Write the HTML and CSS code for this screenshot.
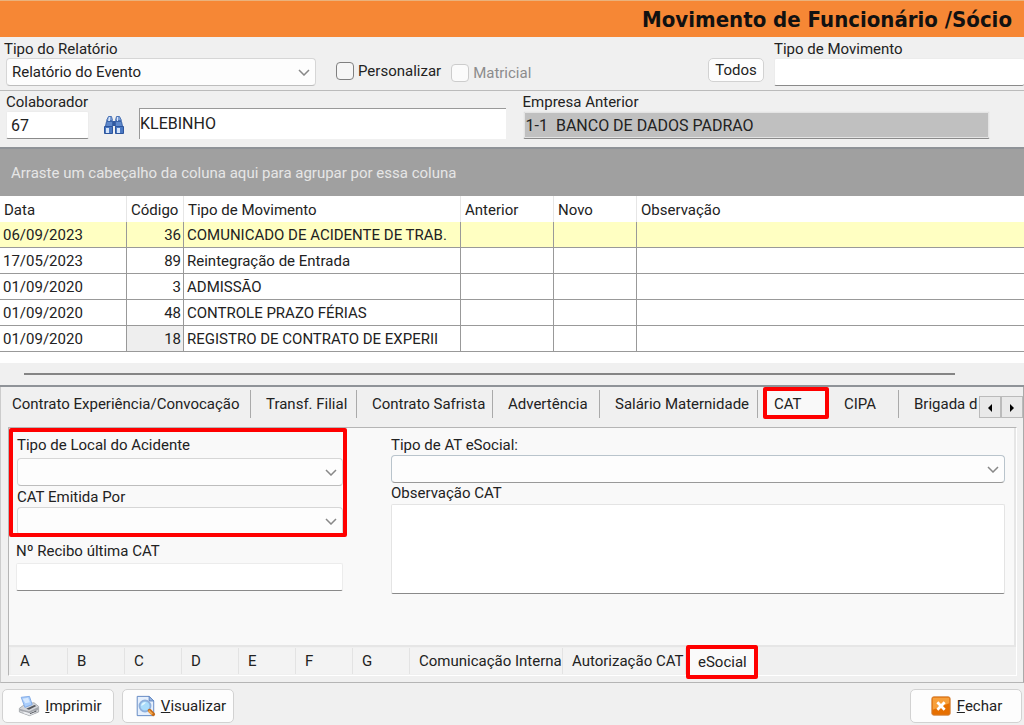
FILE: index.html
```html
<!DOCTYPE html>
<html lang="pt-BR">
<head>
  <meta charset="UTF-8">
  <meta name="viewport" content="width=device-width, initial-scale=1.0">
  <title>Movimento de Funcionário /Sócio</title>
  <link rel="stylesheet" href="styles.css">
</head>
<body>
  <header class="title-bar">
    <h1>Movimento de Funcionário /Sócio</h1>
  </header>

  <section class="filters">
    <div class="field report">
      <label for="report">Tipo do Relatório</label>
      <div class="select">
        <select id="report"><option>Relatório do Evento</option></select>
        <svg viewBox="0 0 12 7"><path d="M1 1l5 5 5-5"/></svg>
      </div>
    </div>
    <label class="check"><input type="checkbox"> Personalizar</label>
    <label class="check disabled"><input type="checkbox" disabled> Matricial</label>
    <button class="btn all">Todos</button>
    <div class="field movement">
      <label for="movement">Tipo de Movimento</label>
      <input id="movement" type="text">
    </div>
  </section>

  <section class="employee">
    <div class="field code">
      <label for="code">Colaborador</label>
      <input id="code" type="text" value="67">
    </div>
    <button class="search" aria-label="Procurar">
      <svg viewBox="0 0 22 20">
        <path fill="#7d9fd6" stroke="#4a72b4" d="M5.500 1.500h3l1 4h-6zM13.500 1.500h3l2 4h-6z"/>
        <path fill="#31599f" d="M9 6h4v5H9z"/>
        <path fill="#5e88cb" stroke="#3a63a8" d="M3.500 6.500h6v5h-7zM12.500 6.500h6l1 5h-7z"/>
        <path fill="#4a78c2" stroke="#2d559c" d="M1.500 11.500h8v7h-8zM12.500 11.500h8v7h-8z"/>
        <path fill="#d6e5f9" d="M3 13h3v5H3zM14 13h3v5h-3zM6 2h1v4H5zM14 2h1v4h-1z"/>
      </svg>
    </button>
    <input class="name" type="text" value="KLEBINHO" aria-label="Nome">
    <div class="field company">
      <label for="company">Empresa Anterior</label>
      <input id="company" type="text" value="1-1  BANCO DE DADOS PADRAO" readonly>
    </div>
  </section>

  <section class="grid">
    <p class="group-by">Arraste um cabeçalho da coluna aqui para agrupar por essa coluna</p>
    <table>
      <colgroup>
        <col class="c-date"><col class="c-code"><col class="c-type"><col class="c-prev"><col class="c-new"><col>
      </colgroup>
      <thead>
        <tr><th>Data</th><th>Código</th><th>Tipo de Movimento</th><th>Anterior</th><th>Novo</th><th>Observação</th></tr>
      </thead>
      <tbody>
        <tr class="current"><td>06/09/2023</td><td>36</td><td>COMUNICADO DE ACIDENTE DE TRAB.</td><td></td><td></td><td></td></tr>
        <tr><td>17/05/2023</td><td>89</td><td>Reintegração de Entrada</td><td></td><td></td><td></td></tr>
        <tr><td>01/09/2020</td><td>3</td><td>ADMISSÃO</td><td></td><td></td><td></td></tr>
        <tr><td>01/09/2020</td><td>48</td><td>CONTROLE PRAZO FÉRIAS</td><td></td><td></td><td></td></tr>
        <tr><td>01/09/2020</td><td class="focus">18</td><td>REGISTRO DE CONTRATO DE EXPERII</td><td></td><td></td><td></td></tr>
      </tbody>
    </table>
    <div class="scroll"><div class="thumb"></div></div>
  </section>

  <main>
    <nav class="tabs">
      <button>Contrato Experiência/Convocação</button>
      <button>Transf. Filial</button>
      <button>Contrato Safrista</button>
      <button>Advertência</button>
      <button>Salário Maternidade</button>
      <button class="active marked">CAT</button>
      <button>CIPA</button>
      <button>Brigada d</button>
      <div class="arrows">
        <button aria-label="Anterior"><svg viewBox="0 0 6 8"><path d="M5 0v8L1 4z"/></svg></button>
        <button aria-label="Próximo"><svg viewBox="0 0 6 8"><path d="M1 0v8l4-4z"/></svg></button>
      </div>
    </nav>

    <div class="panel">
      <div class="form">
        <div class="left">
          <div class="accident marked">
            <label for="place">Tipo de Local do Acidente</label>
            <div class="select">
              <select id="place"><option></option></select>
              <svg viewBox="0 0 12 7"><path d="M1 1l5 5 5-5"/></svg>
            </div>
            <label for="issuer">CAT Emitida Por</label>
            <div class="select">
              <select id="issuer"><option></option></select>
              <svg viewBox="0 0 12 7"><path d="M1 1l5 5 5-5"/></svg>
            </div>
          </div>
          <div class="receipt">
            <label for="receipt">Nº Recibo última CAT</label>
            <input id="receipt" type="text">
          </div>
        </div>
        <div class="right">
          <label for="kind">Tipo de AT eSocial:</label>
          <div class="select hot">
            <select id="kind"><option></option></select>
            <svg viewBox="0 0 12 7"><path d="M1 1l5 5 5-5"/></svg>
          </div>
          <label for="notes">Observação CAT</label>
          <textarea id="notes"></textarea>
        </div>
      </div>
      <nav class="subtabs">
        <button>A</button>
        <button>B</button>
        <button>C</button>
        <button>D</button>
        <button>E</button>
        <button>F</button>
        <button>G</button>
        <button>Comunicação Interna</button>
        <button>Autorização CAT</button>
        <button class="active marked">eSocial</button>
      </nav>
    </div>
  </main>

  <footer>
    <button class="btn">
      <svg viewBox="0 0 24 24">
        <path fill="#d4d6da" stroke="#a4a7ac" d="M1.500 14.500l7-5 9-1 5 4v6l-10 4-11-4z"/>
        <path fill="#a9cdfb" stroke="#7fa9e6" d="M3.500 2.500l9-1 3 9-8 3z"/>
        <path fill="#d5e8ff" d="M5 4l6-1 2 5-5 1z"/>
        <path fill="#a2a5ab" d="M2 15l10 3 10-5v3l-10 4-10-3z"/>
        <path fill="#eceef1" d="M6 18l7 2 5-3v3l-5 2-7-2z"/>
        <path fill="#54575d" d="M9 15l9-4 2 1-8 4zM13 20l7-3v1l-7 3z"/>
      </svg>
      <span><u>I</u>mprimir</span>
    </button>
    <button class="btn">
      <svg viewBox="0 0 24 24">
        <path fill="#e6f0fd" stroke="#5b82c0" d="M3.500 1.500h13l5 5v16h-18z"/>
        <path fill="#9bb8e4" stroke="#5b82c0" d="M16.500 1.500v5h5z"/>
        <circle cx="12" cy="12" r="6" fill="#a9dcfb" stroke="#8fb0dc" stroke-width="2"/>
        <path fill="#e2f6ff" d="M8 12a4 4 0 0 1 5-4c-1 2-3 3-5 4z"/>
        <path fill="none" stroke="#c56a17" stroke-width="4" stroke-linecap="round" d="M17 17l4 4"/>
        <path fill="none" stroke="#f6a84c" stroke-width="2" d="M16 17l4 4"/>
      </svg>
      <span><u>V</u>isualizar</span>
    </button>
    <button class="btn close">
      <svg viewBox="0 0 24 24">
        <rect x="2" y="2" width="20" height="20" rx="2" fill="#e66f00" stroke="#d0813c"/>
        <path fill="#f7a03c" d="M3 3h18v6L3 16z"/>
        <path fill="none" stroke="#fff" stroke-width="3" d="M8 8l8 8M16 8l-8 8"/>
      </svg>
      <span><u>F</u>echar</span>
    </button>
  </footer>
</body>
</html>
```
FILE: styles.css
```css
* {
  box-sizing: border-box;
}
body {
  display: flex;
  flex-direction: column;
  min-height: 100vh;
  margin: 0;
  overflow-x: hidden;
  font: 15px/18px Roboto, "Liberation Sans", sans-serif;
  color: #222;
  background: #f0f0f0;
}
button, input, select, textarea {
  font: inherit;
  color: inherit;
}
button {
  padding: 0;
  border: 0;
  background: none;
  white-space: nowrap;
}
label {
  display: block;
  white-space: nowrap;
}
input[type="text"] {
  display: block;
  width: 100%;
  height: 28px;
  padding: 0 4px;
  border: 1px solid #ececec;
  border-bottom-color: #8a8a8a;
  border-radius: 2px;
  background: #fff;
}

.title-bar {
  display: flex;
  justify-content: flex-end;
  align-items: center;
  height: 37px;
  padding: 2px 12px 0;
  border-top: 1px solid #eab27c;
  background: #f68735;
}
h1 {
  margin: 0;
  font: bold 22px/28px "DejaVu Sans Condensed", "DejaVu Sans", sans-serif;
  color: #111;
}

/* 下拉框 */
.select {
  position: relative;
}
.select select {
  display: block;
  width: 100%;
  height: 28px;
  padding: 0 5px;
  border: 1px solid #d6d6d6;
  border-bottom-color: #bdbdbd;
  border-radius: 4px;
  background: #fdfdfd;
  appearance: none;
}
.select svg {
  position: absolute;
  right: 6px;
  top: 11px;
  width: 12px;
  height: 7px;
  fill: none;
  stroke: #888;
  stroke-width: 1.5;
  pointer-events: none;
}

.filters {
  display: flex;
  align-items: flex-start;
  height: 54px;
  padding: 3px 0 0 6px;
  border-bottom: 1px solid #bbb;
}
.report {
  width: 310px;
}
.report label {
  margin-left: -2px;
}
.check {
  display: flex;
  align-items: center;
  gap: 4px;
  margin: 22px 0 0 20px;
}
.check + .check {
  margin: 24px 0 0 10px;
}
.check input {
  width: 18px;
  height: 18px;
  margin: 0;
  border: 1px solid #808080;
  border-radius: 4px;
  background: #f6f6f6;
  appearance: none;
}
.disabled {
  color: #8c8c8c;
}
.disabled input {
  border-color: #ccc;
  background: #fbfbfb;
}
.btn {
  border: 1px solid #d2d2d2;
  border-radius: 5px;
  background: #fdfdfd;
}
.all {
  width: 56px;
  height: 24px;
  margin: 18px 10px 0 auto;
}
.movement {
  width: 250px;
}
.movement input {
  border-right: 0;
}

.employee {
  display: flex;
  align-items: flex-start;
  height: 56px;
  padding: 2px 34px 0 6px;
}
.code {
  width: 83px;
}
.search {
  width: 22px;
  height: 20px;
  margin: 22px 14px 0;
}
.search svg {
  display: block;
}
.employee .name {
  flex: 366;
  height: 31px;
  margin-top: 15px;
  padding: 0 0 2px;
  border: 0;
  border-top: 1px solid #999;
  border-left: 1px solid #999;
  border-radius: 0;
}
.company {
  flex: 468;
  margin-left: 17px;
}
.company input {
  padding: 0 2px;
  background: #c0c0c0;
  box-shadow: inset 0 0 0 1px #e4e4e4;
  white-space: pre;
}
.employee input {
  font-size: 16px;
}

/* 表格 */
.grid {
  border-top: 2px solid #8f9398;
  border-bottom: 2px solid #8f9398;
  background: #fff;
}
.group-by {
  height: 47px;
  margin: 0;
  padding: 0 11px;
  line-height: 49px;
  color: #e6e6e6;
  background: #a0a0a0;
}
table {
  width: 100%;
  border-collapse: separate;
  border-spacing: 0;
  table-layout: fixed;
}
.c-date {
  width: 127px;
}
.c-code {
  width: 57px;
}
.c-type {
  width: 277px;
}
.c-prev {
  width: 93px;
}
.c-new {
  width: 83px;
}
th, td {
  height: 26px;
  padding: 0 2px 0 3px;
  border-right: 1px solid #999;
  border-bottom: 1px solid #999;
  overflow: hidden;
  white-space: nowrap;
}
th {
  padding: 2px 4px 0;
  border-color: #e6e6e6;
  border-bottom: 0;
  font-weight: normal;
  text-align: left;
}
th:last-child, td:last-child {
  border-right: 0;
}
td:nth-child(2) {
  text-align: right;
}
.current td {
  background: #ffffc2;
}
.focus {
  background: #eee;
}
.scroll {
  height: 22px;
  margin-top: 11px;
  padding: 10px 69px 0 24px;
  background: #f0f0f0;
}
.thumb {
  height: 2px;
  background: #858585;
}

/* 红色标记框 */
.marked {
  position: relative;
}
.marked::after {
  content: "";
  position: absolute;
  inset: 0;
  border: 4px solid #f00;
  border-radius: 2px;
  pointer-events: none;
}

main {
  display: flex;
  flex: 1;
  flex-direction: column;
  padding: 0 6px 6px 7px;
  border-right: 1px solid #aaa;
  border-left: 1px solid #ccc;
  border-bottom: 1px solid #b5b5b5;
}
.tabs {
  display: grid;
  grid-template-columns: 243px 106px 136px 107px 158px 71px 70px 1fr auto;
  height: 40px;
  margin-right: -6px;
}
.tabs > button {
  height: 28px;
  margin-top: 3px;
  padding: 0 0 0 15px;
  border-right: 1px solid #aaa;
  overflow: hidden;
  text-align: left;
}
.tabs > button:first-child {
  padding-left: 4px;
}
.tabs > .active {
  height: 32px;
  margin: 0 0 0 5px;
  padding: 2px 0 0 11px;
  border: 0;
  background: #f9f9f9;
}
.tabs > button:nth-child(8) {
  border: 0;
}
.arrows {
  display: flex;
  margin-top: 9px;
}
.arrows button {
  width: 22px;
  height: 22px;
  border: 1px solid #bbb;
  background: #e9e9e9;
}
.arrows svg {
  width: 6px;
  height: 8px;
}

.panel {
  display: flex;
  flex: 1;
  flex-direction: column;
  border-top: 1px solid #b5b5b5;
  border-left: 1px solid #b5b5b5;
  border-right: 1px solid #fff;
  border-bottom: 1px solid #fff;
}
.form {
  display: flex;
  flex: 1;
  gap: 44px;
  padding-right: 9px;
  border-right: 2px solid #e6e6e6;
  border-bottom: 2px solid #e6e6e6;
  background: #f9f9f9;
}
.left {
  flex: 338;
}
.accident {
  height: 109px;
  padding: 8px 4px 4px 8px;
  overflow: hidden;
}
.accident .select {
  margin: 4px 0 2px;
}
.accident .select + label + .select {
  margin-top: 1px;
}
.receipt {
  padding: 5px 4px 0 7px;
}
.receipt input {
  margin-top: 3px;
}
.right {
  flex: 614;
  padding-top: 8px;
}
.right .select {
  margin: 1px 0;
}
.hot select {
  border-color: #b9c4cc;
  border-bottom-color: #999;
}
textarea {
  display: block;
  width: 100%;
  height: 90px;
  margin-top: 2px;
  border: 1px solid #e4e4e4;
  border-bottom-color: #8a8a8a;
  border-radius: 2px;
  background: #fff;
  resize: none;
}
.subtabs {
  display: grid;
  grid-template-columns: repeat(7, 57px) 153px 123px 72px;
  height: 28px;
  padding-left: 2px;
}
.subtabs button {
  height: 26px;
  margin-top: 1px;
  padding: 0 0 0 9px;
  border-right: 1px solid #e3e3e3;
  text-align: left;
  background: #f3f3f3;
}
.subtabs .active {
  height: 34px;
  margin-top: -2px;
  padding-left: 12px;
  border: 0;
  background: #fafafa;
}

footer {
  display: flex;
  gap: 8px;
  padding: 6px 2px 2px;
}
footer .btn {
  display: flex;
  justify-content: center;
  align-items: center;
  gap: 5px;
  width: 112px;
  height: 34px;
  padding-left: 4px;
}
footer svg {
  width: 22px;
  height: 22px;
}
footer .close {
  margin-left: auto;
  padding: 0;
}
```
